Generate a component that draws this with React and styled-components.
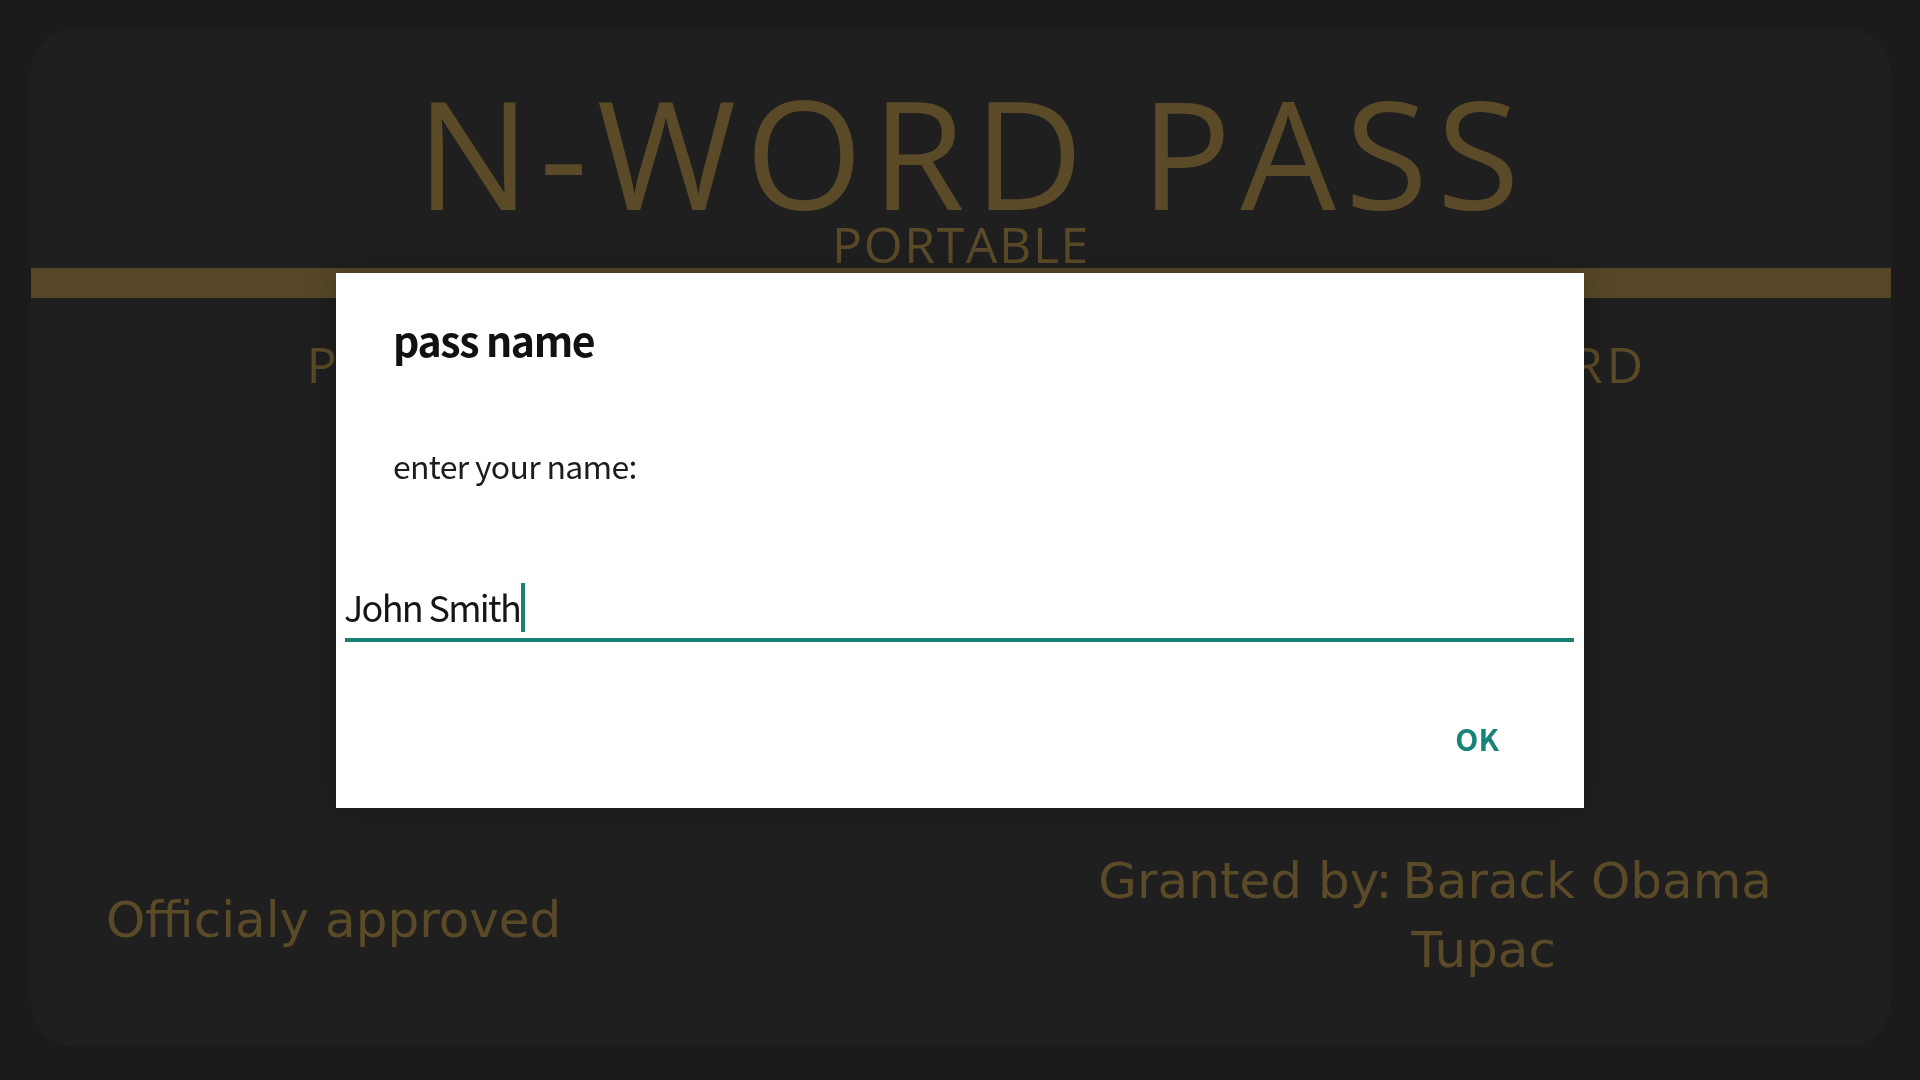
import React from "react";
import styled, { createGlobalStyle } from "styled-components";

const gold = "#5b4a28";
const teal = "#1a8073";

const GlobalStyle = createGlobalStyle`
  html, body {
    margin: 0;
    height: 100%;
  }
  body {
    background: #1b1b1b;
    font-family: "Open Sans", sans-serif;
  }
`;

const Page = styled.div`
  height: 100vh;
  box-sizing: border-box;
  padding: 28px 29px 33px 31px;
`;

const Card = styled.div`
  height: 100%;
  display: flex;
  flex-direction: column;
  background: #1f1f1f;
  border-radius: 44px;
  overflow: hidden;
`;

const Header = styled.header`
  padding-top: 48px;
  text-align: center;
  color: ${gold};
  font-family: "Open Sans", sans-serif;
`;

const Title = styled.h1`
  margin: 0;
  padding-left: 23px;
  font-size: 151px;
  font-weight: 400;
  line-height: 1;
  letter-spacing: 9px;
  white-space: nowrap;
`;

const Subtitle = styled.div`
  margin-top: -8px;
  font-size: 50px;
  line-height: 1;
  letter-spacing: 1.6px;
`;

const Bar = styled.div`
  height: 30px;
  margin-top: -1px;
  background: #574727;
`;

const Statement = styled.p`
  margin: 41px 0 0;
  padding-left: 32px;
  text-align: center;
  font-family: "Open Sans", sans-serif;
  font-size: 50px;
  line-height: 1;
  letter-spacing: 4.2px;
  color: ${gold};
  white-space: nowrap;
`;

const Spacer = styled.div`
  flex: 1;
`;

const Footer = styled.footer`
  display: flex;
  justify-content: space-between;
  align-items: center;
  padding: 0 119px 62px 75px;
  font-family: "DejaVu Sans", sans-serif;
  font-size: 50px;
  line-height: 69px;
  color: ${gold};
`;

const Approved = styled.div`
  padding-top: 8px;
`;

const Grant = styled.div`
  display: flex;
  gap: 10px;
`;

const Names = styled.div`
  display: flex;
  flex-direction: column;
`;

const Name = styled.span`
  padding-left: ${(p) => (p.$indent ? "9px" : "0")};
`;

/* modal prompt */
const Overlay = styled.div`
  position: fixed;
  inset: 0;
  display: flex;
  align-items: center;
  justify-content: center;
`;

const Dialog = styled.div`
  width: 1248px;
  height: 535px;
  box-sizing: border-box;
  background: #fff;
  box-shadow: 0 0 30px rgba(0, 0, 0, 0.22);
  font-family: "Noto Sans CJK SC", "Noto Sans", sans-serif;
`;

const DialogTitle = styled.h2`
  margin: 0;
  padding: 46px 0 0 57px;
  font-size: 41px;
  font-weight: 700;
  line-height: 1;
  letter-spacing: -1.4px;
  color: #111;
`;

const Message = styled.p`
  margin: 89px 0 0;
  padding-left: 57px;
  font-size: 32px;
  line-height: 1;
  letter-spacing: -0.7px;
  color: #1d1d1d;
`;

const Field = styled.div`
  display: flex;
  align-items: flex-end;
  height: 55px;
  margin: 102px 10px 0 9px;
  border-bottom: 4px solid ${teal};
`;

const Value = styled.span`
  margin-bottom: 14px;
  margin-left: -1px;
  font-size: 36px;
  line-height: 1;
  letter-spacing: -1.7px;
  color: #161616;
`;

const Caret = styled.span`
  width: 4px;
  height: 49px;
  margin: 0 0 6px 1px;
  background: ${teal};
`;

const Actions = styled.div`
  display: flex;
  justify-content: flex-end;
  margin-top: 81px;
  padding-right: 85px;
`;

const OkButton = styled.button`
  border: 0;
  padding: 0;
  background: none;
  font-family: inherit;
  font-size: 30px;
  font-weight: 700;
  line-height: 1;
  color: #168477;
  cursor: pointer;
`;

export default function App() {
  return (
    <>
      <GlobalStyle />
      <Page>
        <Card>
          <Header>
            <Title>N-WORD PASS</Title>
            <Subtitle>PORTABLE</Subtitle>
          </Header>
          <Bar />
          <Statement>PASS HOLDER IS PERMITTED TO SAY THE N-WORD</Statement>
          <Spacer />
          <Footer>
            <Approved>Officialy approved</Approved>
            <Grant>
              <span>Granted by:</span>
              <Names>
                <Name>Barack Obama</Name>
                <Name $indent>Tupac</Name>
              </Names>
            </Grant>
          </Footer>
        </Card>
      </Page>
      <Overlay>
        <Dialog>
          <DialogTitle>pass name</DialogTitle>
          <Message>enter your name:</Message>
          <Field>
            <Value>John Smith</Value>
            <Caret />
          </Field>
          <Actions>
            <OkButton>OK</OkButton>
          </Actions>
        </Dialog>
      </Overlay>
    </>
  );
}
